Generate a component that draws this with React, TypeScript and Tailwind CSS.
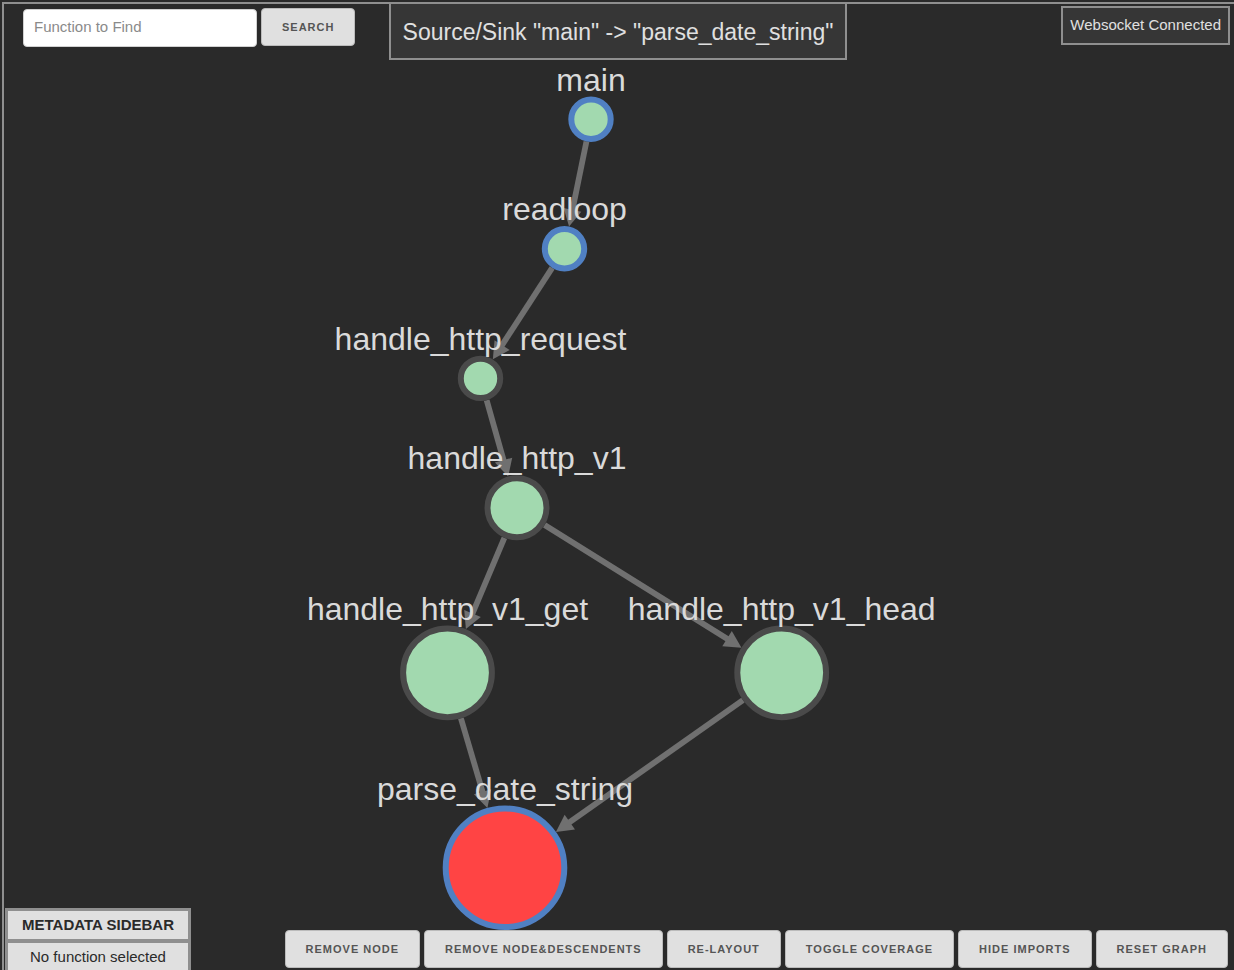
import React from "react";

type GraphNode = {
  id: string;
  x: number;
  y: number;
  r: number;
  labelY: number;
  fill: string;
  border: string;
};

const GREEN = "#a2d9af";
const RED = "#ff4444";
const BLUE = "#5080c3";
const GREY = "#4a4a4a";
const BORDER = 6;
const ARROW = 17;

const nodes: GraphNode[] = [
  { id: "main", x: 591, y: 119.3, r: 19.7, labelY: 91, fill: GREEN, border: BLUE },
  { id: "readloop", x: 564.5, y: 248.8, r: 19.7, labelY: 220, fill: GREEN, border: BLUE },
  { id: "handle_http_request", x: 480.5, y: 378.4, r: 19.7, labelY: 350, fill: GREEN, border: GREY },
  { id: "handle_http_v1", x: 517, y: 507.8, r: 29.5, labelY: 469, fill: GREEN, border: GREY },
  { id: "handle_http_v1_get", x: 447.5, y: 672.8, r: 44.4, labelY: 620, fill: GREEN, border: GREY },
  { id: "handle_http_v1_head", x: 781.7, y: 672.8, r: 44.4, labelY: 620, fill: GREEN, border: GREY },
  { id: "parse_date_string", x: 505, y: 867.8, r: 59.3, labelY: 800, fill: RED, border: BLUE },
];

const edges: [string, string][] = [
  ["main", "readloop"],
  ["readloop", "handle_http_request"],
  ["handle_http_request", "handle_http_v1"],
  ["handle_http_v1", "handle_http_v1_get"],
  ["handle_http_v1", "handle_http_v1_head"],
  ["handle_http_v1_get", "parse_date_string"],
  ["handle_http_v1_head", "parse_date_string"],
];

const actions = [
  "Remove Node",
  "Remove Node&Descendents",
  "Re-Layout",
  "Toggle Coverage",
  "Hide Imports",
  "Reset Graph",
];

function Edge({ from, to }: { from: GraphNode; to: GraphNode }) {
  const dx = to.x - from.x;
  const dy = to.y - from.y;
  const length = Math.hypot(dx, dy);
  const ux = dx / length;
  const uy = dy / length;
  const start = from.r + BORDER / 2;
  const end = length - to.r - BORDER / 2;
  const at = (along: number, across: number) => ({
    x: from.x + ux * along - uy * across,
    y: from.y + uy * along + ux * across,
  });
  const a = at(start, 0);
  const b = at(end - ARROW + 1, 0);
  const corners = [at(end, 0), at(end - ARROW, 9), at(end - ARROW, -9)];
  return (
    <g>
      <line x1={a.x} y1={a.y} x2={b.x} y2={b.y} stroke="#707070" strokeWidth={5.8} />
      <polygon points={corners.map((p) => `${p.x},${p.y}`).join(" ")} fill="#707070" />
    </g>
  );
}

function CallGraph() {
  const find = (id: string) => nodes.find((n) => n.id === id)!;
  return (
    <svg
      viewBox="0 0 1234 970"
      className="absolute inset-0 h-full w-full"
      role="img"
      aria-label="Call graph"
    >
      {edges.map(([from, to]) => (
        <Edge key={`${from}-${to}`} from={find(from)} to={find(to)} />
      ))}
      {nodes.map((n) => (
        <g key={n.id}>
          <circle cx={n.x} cy={n.y} r={n.r} fill={n.fill} stroke={n.border} strokeWidth={BORDER} />
          <text x={n.x} y={n.labelY} textAnchor="middle" fill="#dadada" className="text-[32px]">
            {n.id}
          </text>
        </g>
      ))}
    </svg>
  );
}

function Button({ children, type = "button" }: { children: React.ReactNode; type?: "button" | "submit" }) {
  return (
    <button
      type={type}
      className="h-[38px] cursor-pointer rounded-[4px] border border-[#bbbbbb] bg-[#e0e0e0] px-5 text-[11px] font-semibold tracking-[1px] whitespace-nowrap text-[#555555] uppercase"
    >
      {children}
    </button>
  );
}

export default function App() {
  return (
    <div className="relative h-screen overflow-hidden bg-[#2a2a2a] pt-[2px] pl-[2px] font-['Liberation_Sans',Arial,sans-serif] text-[15px]">
      <CallGraph />
      <div className="relative flex h-full flex-col justify-between border-t-2 border-l-2 border-[#8f8f8f]">
        <header className="grid grid-cols-[1fr_auto_1fr] items-start pr-[2px]">
          <form className="flex items-start gap-1 pt-1 pl-[19px]" onSubmit={(e) => e.preventDefault()}>
            <input
              type="text"
              aria-label="Function to Find"
              placeholder="Function to Find"
              className="mt-px h-[38px] w-[234px] rounded-[4px] border border-[#d1d1d1] bg-white px-[10px] pb-1 text-[#222222] placeholder:text-[#8a8a8a]"
            />
            <Button type="submit">Search</Button>
          </form>
          <h1 className="border-x-2 border-b-2 border-[#8f8f8f] bg-[#363636] px-3 pt-[10px] pb-2 text-[23px] leading-9 whitespace-nowrap text-[#e0e0e0]">
            Source/Sink "main" -&gt; "parse_date_string"
          </h1>
          <div className="mt-[2px] mr-[2px] justify-self-end border-2 border-[#8f8f8f] bg-[#363636] px-[7px] pt-[5px] pb-[6px] leading-6 whitespace-nowrap text-[#e0e0e0]">
            Websocket Connected
          </div>
        </header>
        <footer className="flex items-end justify-between">
          <section className="ml-px w-[186px] border-x-[3px] border-t-[3px] border-[#8f8f8f] bg-[#e0e0e0] text-center text-[#2a2a2a]">
            <h2 className="border-b-4 border-[#8f8f8f] leading-7 font-bold">METADATA SIDEBAR</h2>
            <p className="h-[27px] leading-7">No function selected</p>
          </section>
          <div className="flex gap-1 pr-[6px] pb-[2px]">
            {actions.map((label) => (
              <Button key={label}>{label}</Button>
            ))}
          </div>
        </footer>
      </div>
    </div>
  );
}
